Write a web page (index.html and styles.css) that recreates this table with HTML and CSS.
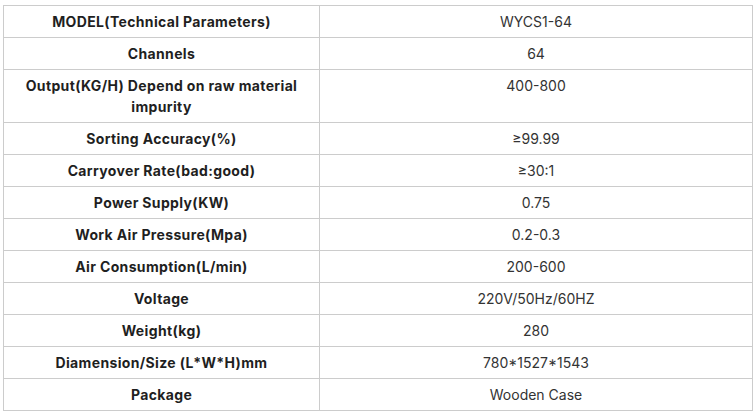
FILE: index.html
```html
<!DOCTYPE html>
<html>
<head>
<meta charset="utf-8">
<link rel="stylesheet" href="styles.css">
</head>
<body>
<table class="spec">
  <tbody>
    <tr><td class="key">MODEL(Technical Parameters)</td><td class="val">WYCS1-64</td></tr>
    <tr><td class="key">Channels</td><td class="val">64</td></tr>
    <tr><td class="key">Output(KG/H) Depend on raw material impurity</td><td class="val">400-800</td></tr>
    <tr><td class="key">Sorting Accuracy(%)</td><td class="val">≥99.99</td></tr>
    <tr><td class="key">Carryover Rate(bad:good)</td><td class="val">≥30:1</td></tr>
    <tr><td class="key">Power Supply(KW)</td><td class="val">0.75</td></tr>
    <tr><td class="key">Work Air Pressure(Mpa)</td><td class="val">0.2-0.3</td></tr>
    <tr><td class="key">Air Consumption(L/min)</td><td class="val">200-600</td></tr>
    <tr><td class="key">Voltage</td><td class="val">220V/50Hz/60HZ</td></tr>
    <tr><td class="key">Weight(kg)</td><td class="val">280</td></tr>
    <tr><td class="key">Diamension/Size (L*W*H)mm</td><td class="val">780*1527*1543</td></tr>
    <tr><td class="key">Package</td><td class="val">Wooden Case</td></tr>
  </tbody>
</table>
</body>
</html>
```
FILE: styles.css
```css
html, body {
  margin: 0;
  padding: 0;
  background: #fff;
}
body {
  padding: 5px 3px 0 3px;
  font-family: Inter, "Liberation Sans", sans-serif;
  font-size: 14px;
}
.spec {
  border-collapse: collapse;
  width: 750px;
  table-layout: fixed;
}
.spec td {
  border: 1px solid #cccccc;
  padding: 5px 10px;
  line-height: 21px;
  text-align: center;
  vertical-align: top;
}
.spec .key {
  width: 295px;
  font-weight: 700;
  letter-spacing: 0.35px;
  color: #1f1f1f;
}
.spec .val {
  color: #333333;
}
```
